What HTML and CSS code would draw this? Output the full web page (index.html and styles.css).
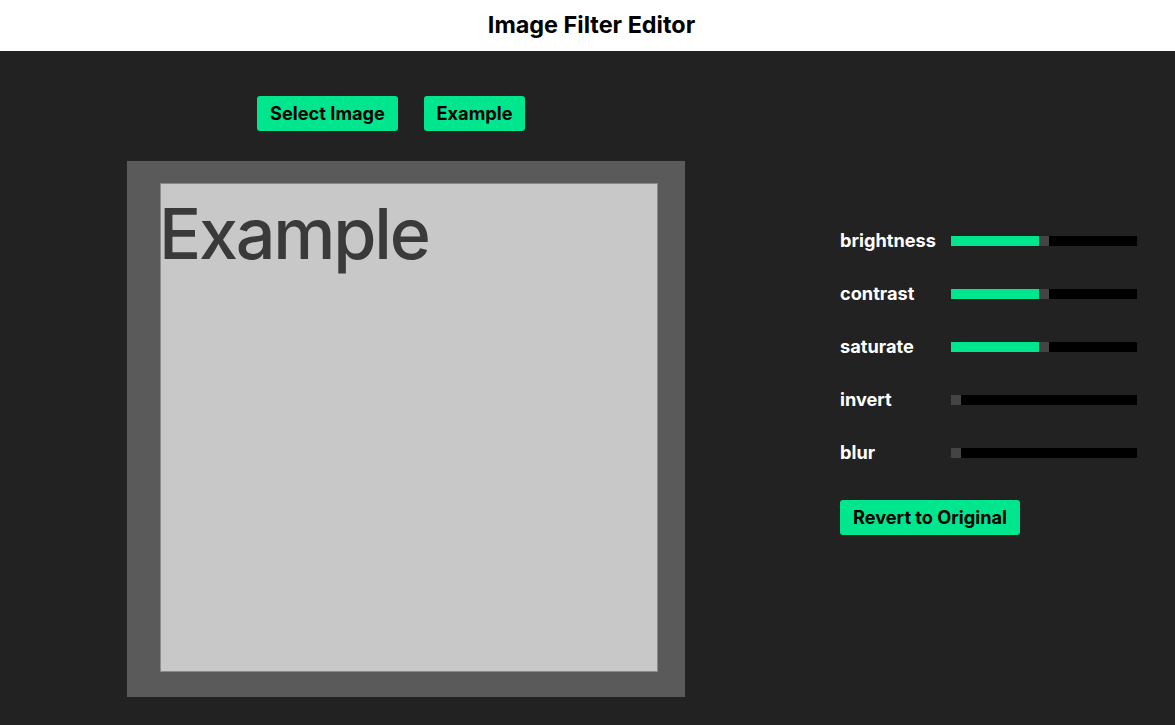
FILE: index.html
```html
<!DOCTYPE html>
<html lang="en">
<head>
<meta charset="utf-8">
<title>Image Filter Editor</title>
<link rel="stylesheet" href="styles.css">
</head>
<body>
<header class="topbar"><h1 class="title">Image Filter Editor</h1></header>
<main class="main">
  <section class="left">
    <div class="actions">
      <button class="btn btn-select">Select Image</button>
      <button class="btn btn-example">Example</button>
    </div>
    <div class="frame">
      <div class="picture"><span class="picture-text">Example</span></div>
    </div>
  </section>
  <section class="right">
    <div class="row"><span class="label">brightness</span><input class="slider" type="range" min="0" max="200" value="100" style="background: linear-gradient(to right, #00e68f 0 88px, #000 88px)"></div>
    <div class="row"><span class="label">contrast</span><input class="slider" type="range" min="0" max="200" value="100" style="background: linear-gradient(to right, #00e68f 0 88px, #000 88px)"></div>
    <div class="row"><span class="label">saturate</span><input class="slider" type="range" min="0" max="200" value="100" style="background: linear-gradient(to right, #00e68f 0 88px, #000 88px)"></div>
    <div class="row"><span class="label">invert</span><input class="slider" type="range" min="0" max="100" value="0" style="background: #000"></div>
    <div class="row"><span class="label">blur</span><input class="slider" type="range" min="0" max="10" value="0" style="background: #000"></div>
    <button class="btn revert">Revert to Original</button>
  </section>
</main>
</body>
</html>
```

FILE: styles.css
```css
* { box-sizing: border-box; }
html, body { margin: 0; padding: 0; }
body {
  background: #222222;
  font-family: Inter, "Liberation Sans", sans-serif;
  height: 725px;
  overflow: hidden;
}
.topbar {
  background: #ffffff;
  height: 51px;
  display: flex;
  align-items: center;
  justify-content: center;
  padding-left: 8px;
  padding-bottom: 2px;
}
.title {
  margin: 0;
  font-size: 23.4px;
  font-weight: 700;
  color: #000;
}
.main {
  display: flex;
  padding-left: 127px;
}
.left {
  width: 558px;
  display: flex;
  flex-direction: column;
  padding-top: 45px;
}
.actions {
  display: flex;
  gap: 26px;
  padding-left: 130px;
  margin-bottom: 30px;
}
.btn {
  background: #00e68f;
  color: #000;
  border: none;
  border-radius: 3px;
  height: 35px;
  padding: 0 0 2px;
  font-family: Inter, "Liberation Sans", sans-serif;
  font-size: 18.2px;
  font-weight: 700;
  cursor: pointer;
}
.btn-select { width: 141px; }
.btn-example { width: 101px; }
.frame {
  background: #5a5a5a;
  height: 536px;
  padding: 22px 27px 25px 33px;
}
.picture {
  width: 498px;
  height: 489px;
  background: #c8c8c8;
  border: 1px solid #8a8a8a;
  overflow: hidden;
}
.picture-text {
  display: block;
  font-family: Inter, "Liberation Sans", sans-serif;
  font-size: 70px;
  font-weight: 500;
  letter-spacing: -2.2px;
  color: #3a3a3a;
  line-height: 1;
  margin-top: 15px;
  margin-left: -2px;
  filter: blur(0.6px);
}
.right {
  margin-left: 155px;
  padding-top: 174px;
  display: flex;
  flex-direction: column;
  align-items: flex-start;
}
.row {
  display: flex;
  align-items: center;
  height: 30px;
  margin-bottom: 23px;
}
.label {
  width: 111px;
  color: #fff;
  font-size: 18.2px;
  font-weight: 700;
}
.slider {
  -webkit-appearance: none;
  appearance: none;
  width: 186px;
  height: 10px;
  margin: 1px 0 0;
  background: #000;
  outline: none;
}
.slider::-webkit-slider-thumb {
  -webkit-appearance: none;
  appearance: none;
  width: 10px;
  height: 10px;
  background: #444;
  border: none;
  border-radius: 0;
}
.revert {
  margin-top: 10px;
  width: 180px;
}
```
